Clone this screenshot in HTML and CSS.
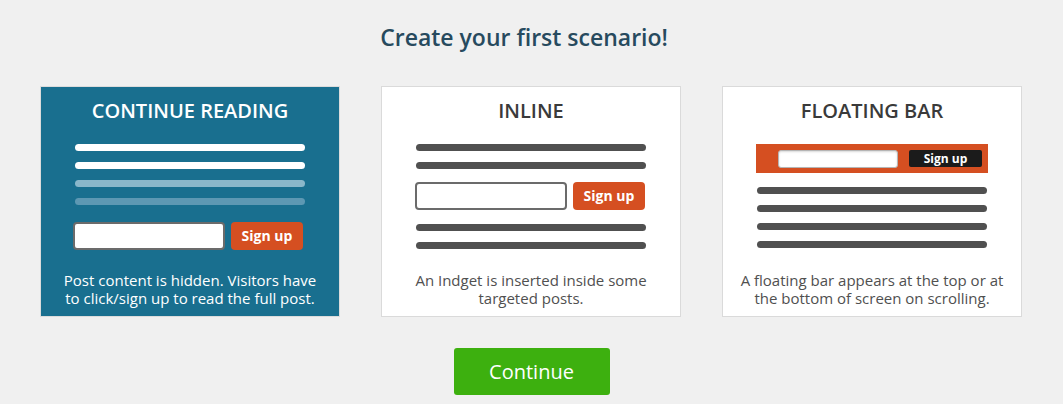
FILE: index.html
```html
<!DOCTYPE html>
<html lang="en">
<head>
<meta charset="utf-8">
<title>Create your first scenario</title>
<link rel="stylesheet" href="styles.css">
</head>
<body>
<main class="page">
  <h1 class="heading">Create your first scenario!</h1>
  <div class="cards">
    <section class="card card-active">
      <h2 class="card-title">CONTINUE READING</h2>
      <div class="graphic">
        <div class="line line-light"></div>
        <div class="line line-light"></div>
        <div class="line line-fade1"></div>
        <div class="line line-fade2"></div>
        <div class="form-row form-row-cr">
          <div class="input input-cr"></div>
          <div class="signup">Sign up</div>
        </div>
      </div>
      <p class="desc">Post content is hidden. Visitors have to click/sign up to read the full post.</p>
    </section>
    <section class="card">
      <h2 class="card-title">INLINE</h2>
      <div class="graphic">
        <div class="line"></div>
        <div class="line"></div>
        <div class="form-row form-row-inline">
          <div class="input"></div>
          <div class="signup">Sign up</div>
        </div>
        <div class="line"></div>
        <div class="line"></div>
      </div>
      <p class="desc">An Indget is inserted inside some targeted posts.</p>
    </section>
    <section class="card">
      <h2 class="card-title">FLOATING BAR</h2>
      <div class="graphic">
        <div class="bar">
          <div class="bar-input"></div>
          <div class="bar-signup">Sign up</div>
        </div>
        <div class="line line-after-bar"></div>
        <div class="line"></div>
        <div class="line"></div>
        <div class="line"></div>
      </div>
      <p class="desc">A floating bar appears at the top or at the bottom of screen on scrolling.</p>
    </section>
  </div>
  <div class="actions">
    <button class="continue" type="button">Continue</button>
  </div>
</main>
</body>
</html>
```

FILE: styles.css
```css
html, body {
  margin: 0;
  padding: 0;
}
body {
  background: #f0f0f0;
  font-family: "Open Sans", "Liberation Sans", sans-serif;
  width: 1063px;
  height: 404px;
  overflow: hidden;
}
.page {
  display: flex;
  flex-direction: column;
  align-items: center;
  padding-top: 21px;
}
.heading {
  margin: 0;
  font-size: 23px;
  line-height: 32px;
  font-weight: 600;
  color: #274a5e;
  text-align: center;
  padding-right: 15px;
}
.cards {
  display: flex;
  gap: 41px;
  margin-top: 33px;
  margin-left: -1px;
}
.card {
  box-sizing: border-box;
  width: 300px;
  height: 231px;
  background: #fff;
  border: 1px solid #dadada;
  display: flex;
  flex-direction: column;
  align-items: center;
}
.card-active {
  background: #196f8f;
  border-color: #dcdcdc;
}
.card-title {
  margin: 0;
  padding-top: 12px;
  font-size: 20px;
  line-height: 24px;
  font-weight: 600;
  color: #3a3a3a;
  text-align: center;
}
.card-active .card-title {
  color: #fff;
}
.graphic {
  margin-top: 21px;
  width: 232px;
  display: flex;
  flex-direction: column;
  align-items: center;
}
.line {
  width: 230px;
  height: 7px;
  border-radius: 4px;
  background: #505050;
  margin-bottom: 11px;
}
.line:last-child {
  margin-bottom: 0;
}
.line-light { background: #ffffff; }
.line-fade1 { background: #8ab7ca; }
.line-fade2 { background: #5d98b3; }
.form-row {
  width: 230px;
  display: flex;
  justify-content: space-between;
  align-items: center;
}
.form-row-cr {
  margin-top: 6px;
  margin-left: -4px;
}
.input-cr {
  width: 151px;
}
.form-row-inline {
  margin-top: 2px;
  margin-bottom: 14px;
  margin-left: -2px;
}
.input {
  box-sizing: border-box;
  width: 152px;
  height: 28px;
  background: #fff;
  border: 2px solid #6b6b6b;
  border-radius: 4px;
}
.signup {
  width: 72px;
  height: 28px;
  border-radius: 4px;
  background: #d54f21;
  color: #fff;
  font-weight: 700;
  font-size: 14px;
  line-height: 28px;
  text-align: center;
}
.bar {
  box-sizing: border-box;
  width: 232px;
  height: 29px;
  background: #d54f21;
  display: flex;
  align-items: center;
  padding-left: 22px;
  gap: 11px;
}
.bar-input {
  box-sizing: border-box;
  width: 120px;
  height: 18px;
  background: #fff;
  border: 1px solid #b5b5b5;
  border-radius: 3px;
  box-shadow: inset 0 1px 2px rgba(0,0,0,0.15);
}
.bar-signup {
  width: 73px;
  height: 17px;
  background: #1b1b1b;
  border-radius: 2px;
  color: #fff;
  font-weight: 700;
  font-size: 12px;
  line-height: 17px;
  text-align: center;
}
.line-after-bar {
  margin-top: 14px;
}
.desc {
  margin: auto 0 0;
  padding: 0 16px 9px;
  font-size: 15px;
  line-height: 18px;
  color: #505050;
  text-align: center;
}
.card-active .desc {
  color: #fff;
}
.actions {
  margin-top: 31px;
  display: flex;
  justify-content: center;
}
.continue {
  width: 156px;
  height: 47px;
  border: 0;
  border-radius: 3px;
  background: #3db00f;
  color: #fff;
  font-family: "Open Sans", "Liberation Sans", sans-serif;
  font-size: 20px;
  font-weight: 400;
  padding: 0;
  cursor: pointer;
}
```
